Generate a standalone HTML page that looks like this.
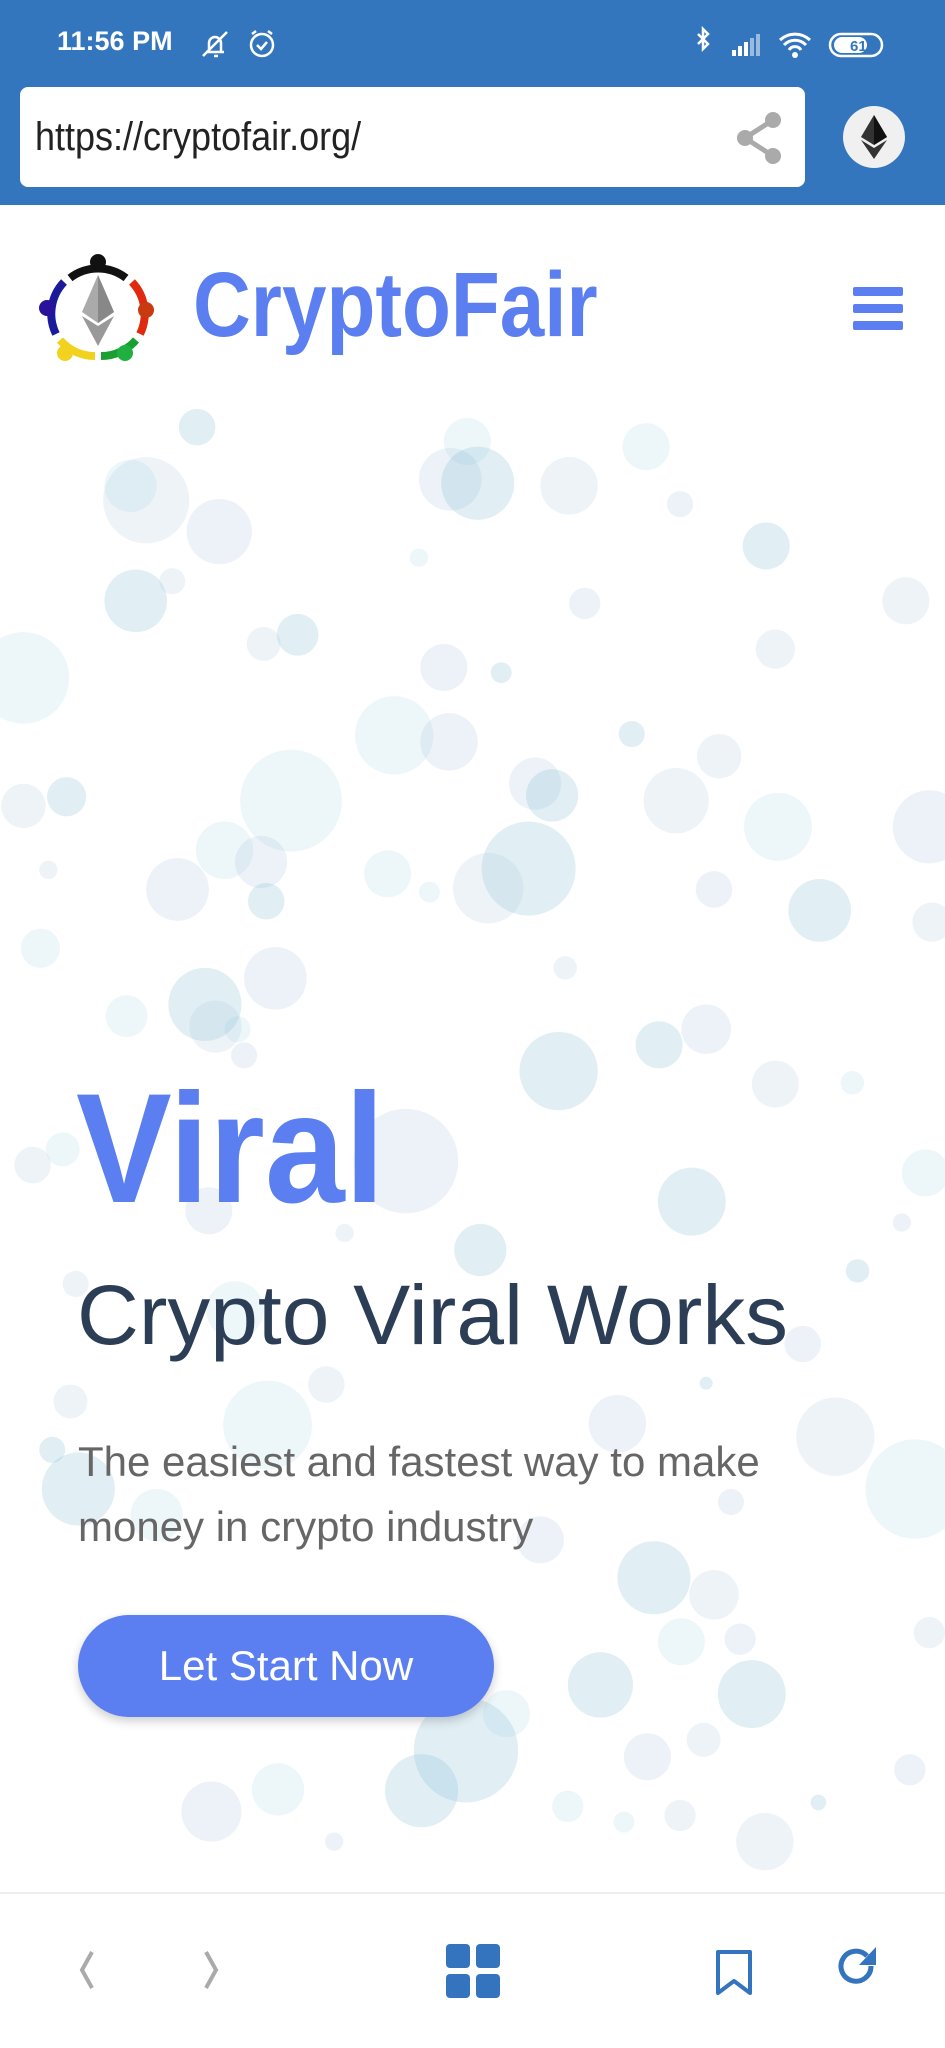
<!DOCTYPE html>
<html><head><meta charset="utf-8"><style>
*{margin:0;padding:0;box-sizing:border-box}
body{width:945px;height:2048px;position:relative;overflow:hidden;background:#fff;font-family:"Liberation Sans",sans-serif}
.abs{position:absolute}
</style></head><body>
<svg class="abs" style="left:0;top:0" width="945" height="2048" viewBox="0 0 724 1568" preserveAspectRatio="none">
<g id="b"></g>
</svg>
<script>
var d=[[151,327,14],[112,383,33],[100,372,20],[168,407,25],[104,460,24],[132,445,10],[358,338,18],[345,367,24],[366,370,28],[436,372,22],[495,342,18],[521,386,10],[587,418,18],[694,460,18],[321,427,7],[448,462,12],[228,486,16],[202,493,13],[18,519,35],[340,511,18],[384,515,8],[594,497,15],[302,563,30],[344,568,22],[484,562,10],[551,579,17],[223,613,39],[410,600,20],[423,609,20],[518,613,25],[596,633,26],[712,633,28],[51,610,15],[18,617,17],[172,651,22],[200,660,20],[405,665,36],[374,680,27],[297,669,18],[136,681,24],[204,690,14],[37,666,7],[329,683,8],[547,681,14],[628,697,24],[714,706,15],[31,726,15],[211,749,24],[157,769,28],[433,741,9],[97,778,16],[541,788,19],[505,800,18],[165,786,20],[182,788,10],[187,808,10],[428,820,30],[594,830,18],[653,829,9],[311,889,40],[530,920,26],[25,892,14],[48,880,13],[160,927,18],[368,957,20],[264,944,7],[709,898,18],[691,936,7],[657,973,9],[58,983,10],[180,1003,22],[615,1029,14],[541,1059,5],[54,1073,13],[205,1091,34],[473,1090,22],[40,1110,10],[640,1100,30],[701,1140,38],[414,1179,18],[501,1208,28],[547,1221,19],[522,1257,18],[567,1255,12],[576,1297,26],[712,1250,12],[388,1312,18],[496,1345,18],[357,1340,40],[539,1332,13],[213,1370,20],[162,1387,23],[323,1371,28],[586,1410,22],[435,1383,12],[697,1355,12],[627,1380,6],[521,1390,12],[478,1395,8],[256,1410,7],[60,1140,28],[250,1060,14],[120,1160,20],[560,1150,10],[460,1290,25]];
var c=["rgba(120,180,210,0.22)","rgba(160,190,215,0.18)","rgba(140,200,220,0.16)","rgba(170,195,225,0.22)"];
var g=document.getElementById('b'),h='';
d.forEach(function(e,i){h+='<circle cx="'+e[0]+'" cy="'+e[1]+'" r="'+e[2]+'" fill="'+c[i%4]+'"/>';});
g.innerHTML=h;
</script>
<div class="abs" style="left:0;top:0;width:945px;height:205px;background:#3476bd"></div>
<div class="abs" style="left:57px;top:26px;color:#fff;font-weight:bold;font-size:27px">11:56 PM</div>
<svg class="abs" style="left:200px;top:28px" width="80" height="32" viewBox="0 0 80 32" fill="none" stroke="#fff" stroke-width="2.5"><path d="M6 24h18M9 24v-9a6 6 0 0 1 12 0v9M3 28L27 4M14 28h4"/><circle cx="62" cy="17" r="11"/><path d="M57 17l4 4 6-7M52 6l4-3M72 6l-4-3"/></svg>
<svg class="abs" style="left:692px;top:26px" width="200" height="36" viewBox="0 0 200 36"><path d="M6 8l10 10-5 5V3l5 5-10 10" stroke="#fff" stroke-width="2.5" fill="none"/><g fill="#fff"><rect x="40" y="24" width="4" height="6"/><rect x="46" y="20" width="4" height="10"/><rect x="52" y="16" width="4" height="14"/><rect x="58" y="12" width="4" height="18" opacity=".5"/><rect x="64" y="8" width="4" height="22" opacity=".5"/></g><path d="M88 14a22 22 0 0 1 30 0M92 19a15 15 0 0 1 22 0M97 24a7 7 0 0 1 12 0" stroke="#fff" stroke-width="3" fill="none"/><circle cx="103" cy="29" r="3" fill="#fff"/><rect x="138" y="8" width="52" height="22" rx="11" stroke="#fff" stroke-width="2.5" fill="none"/><rect x="142" y="11" width="33" height="16" rx="8" fill="#fff"/><text x="158" y="25" font-size="15" font-weight="bold" fill="#3476bd" font-family="Liberation Sans">61</text></svg>
<div class="abs" style="left:20px;top:87px;width:785px;height:100px;background:#fff;border-radius:8px"></div>
<div class="abs" style="left:35px;top:115px;font-size:40px;color:#222;transform:scaleX(.9);transform-origin:left">https://cryptofair.org/</div>
<svg class="abs" style="left:733px;top:110px" width="52" height="56" viewBox="0 0 52 56"><path d="M40 10L12 28l28 18" stroke="#aaa" stroke-width="5" fill="none"/><circle cx="40" cy="10" r="8" fill="#aaa"/><circle cx="12" cy="28" r="8" fill="#aaa"/><circle cx="40" cy="46" r="8" fill="#aaa"/></svg>
<div class="abs" style="left:843px;top:106px;width:62px;height:62px;border-radius:50%;background:#f0f0f0"></div>
<svg class="abs" style="left:859px;top:115px" width="30" height="44" viewBox="0 0 30 44"><path d="M15 0L2 22l13 8 13-8z" fill="#333"/><path d="M2 25l13 19 13-19-13 8z" fill="#333"/><path d="M15 0v30l13-8z" fill="#111"/></svg>
<svg class="abs" style="left:38px;top:250px" width="120" height="120" viewBox="0 0 120 120" fill="none" stroke-width="8">
<path d="M32 28A46 46 0 0 1 88 28" stroke="#111"/><path d="M26 32A46 46 0 0 0 18 84" stroke="#1a1a9a"/><path d="M94 32A46 46 0 0 1 102 84" stroke="#e02a10"/><path d="M22 90A46 46 0 0 0 57 106" stroke="#f2d21e"/><path d="M63 106A46 46 0 0 0 98 90" stroke="#1aa030"/>
<circle cx="60" cy="12" r="8" fill="#111" stroke="none"/><circle cx="9" cy="58" r="8" fill="#2a129a" stroke="none"/><circle cx="108" cy="60" r="8" fill="#c83a10" stroke="none"/><circle cx="27" cy="103" r="8" fill="#f2d21e" stroke="none"/><circle cx="87" cy="103" r="8" fill="#20b040" stroke="none"/>
<path d="M60 25L44 62l16 11 16-11z" fill="#aaa" stroke="none"/><path d="M44 66l16 30 16-30-16 10z" fill="#999" stroke="none"/><path d="M60 25v48l16-11z" fill="#888" stroke="none"/></svg>
<div class="abs" style="left:193px;top:259px;font-size:92px;font-weight:bold;color:#5b7ff0;transform:scaleX(.87);transform-origin:left;line-height:1">CryptoFair</div>
<div class="abs" style="left:853px;top:287px;width:50px;height:9px;background:#5b7ff0;border-radius:2px"></div>
<div class="abs" style="left:853px;top:304px;width:50px;height:9px;background:#5b7ff0;border-radius:2px"></div>
<div class="abs" style="left:853px;top:321px;width:50px;height:9px;background:#5b7ff0;border-radius:2px"></div>
<div class="abs" style="left:76px;top:1056px;font-size:156px;font-weight:bold;color:#5b7ff0;transform:scaleX(.92);transform-origin:left;line-height:1.2">Viral</div>
<div class="abs" style="left:77px;top:1273px;font-size:84px;color:#2c3e55;line-height:1;transform:scaleX(1.02);transform-origin:left">Crypto Viral Works</div>
<div class="abs" style="left:78px;top:1429px;font-size:42px;color:#666;line-height:65px;width:820px">The easiest and fastest way to make<br>money in crypto industry</div>
<div class="abs" style="left:78px;top:1615px;width:416px;height:102px;border-radius:51px;background:#5b7ff0;box-shadow:0 4px 10px rgba(0,0,0,.2);color:#fff;font-size:42px;text-align:center;line-height:102px">Let Start Now</div>
<div class="abs" style="left:0;top:1892px;width:945px;height:156px;background:#fff;border-top:2px solid #eee"></div>
<svg class="abs" style="left:0;top:1930px" width="945" height="80" viewBox="0 0 945 80" fill="none">
<path d="M92 22L82 40l10 18" stroke="#aaa" stroke-width="4"/><path d="M206 22l10 18-10 18" stroke="#aaa" stroke-width="4"/>
<g fill="#3473bd"><rect x="446" y="14" width="24" height="24" rx="4"/><rect x="476" y="14" width="24" height="24" rx="4"/><rect x="446" y="44" width="24" height="24" rx="4"/><rect x="476" y="44" width="24" height="24" rx="4"/></g>
<path d="M718 22h32v41l-16-12-16 12z" stroke="#3473bd" stroke-width="4" stroke-linejoin="round"/>
<path d="M871 36a15 15 0 1 1-4-10" stroke="#3473bd" stroke-width="5"/><path d="M876 17v18h-17z" fill="#3473bd"/>
</svg>
</body></html>
